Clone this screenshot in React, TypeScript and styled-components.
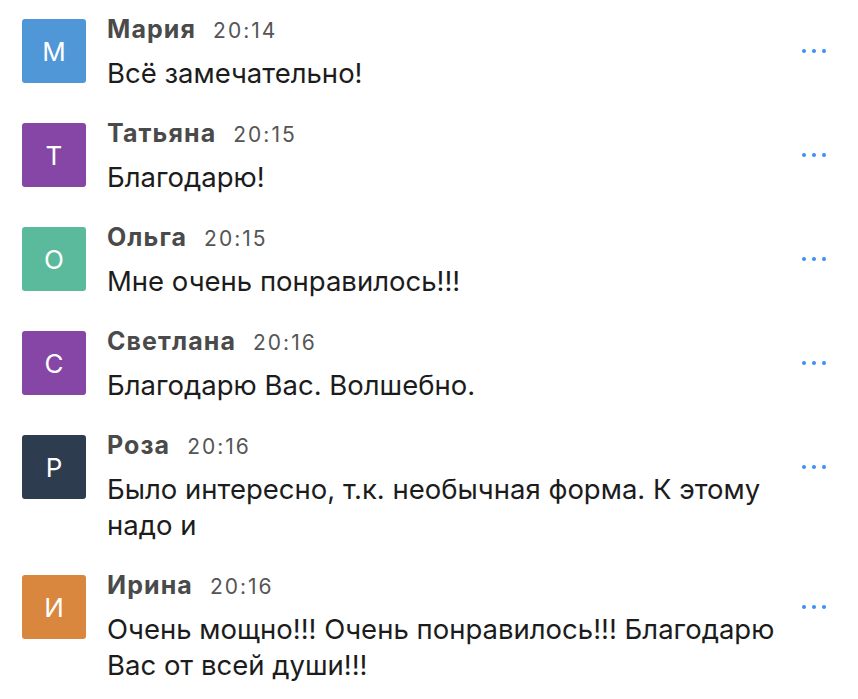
import React, {FC} from 'react';
import styled, {createGlobalStyle} from 'styled-components';

interface Message {
  name: string;
  time: string;
  text: string;
  color: string;
}

const messages: Message[] = [
  {name: 'Мария', time: '20:14', text: 'Всё замечательно!', color: '#5097d7'},
  {name: 'Татьяна', time: '20:15', text: 'Благодарю!', color: '#8646a6'},
  {name: 'Ольга', time: '20:15', text: 'Мне очень понравилось!!!', color: '#5bba9b'},
  {name: 'Светлана', time: '20:16', text: 'Благодарю Вас. Волшебно.', color: '#8646a6'},
  {name: 'Роза', time: '20:16', text: 'Было интересно, т.к. необычная форма. К этому надо и', color: '#2e3c4f'},
  {
    name: 'Ирина',
    time: '20:16',
    text: 'Очень мощно!!! Очень понравилось!!! Благодарю Вас от всей души!!!',
    color: '#d9863e',
  },
];

const App: FC = () => (
  <>
    <GlobalStyle />
    <List>
      {messages.map(({name, time, text, color}) => (
        <Row key={name}>
          <Avatar $color={color}>{name[0]}</Avatar>
          <Content>
            <Header>
              <Name>{name}</Name>
              <Time>{time}</Time>
            </Header>
            <Text>{text}</Text>
          </Content>
          <More aria-label="more">
            <Dot />
            <Dot />
            <Dot />
          </More>
        </Row>
      ))}
    </List>
  </>
);

const GlobalStyle = createGlobalStyle`
  body {
    margin: 0;
    background: #fff;
    font-family: Inter, "Liberation Sans", sans-serif;
  }
`;

const List = styled.div`
  display: flex;
  flex-direction: column;
  width: 858px;
`;

const Row = styled.div`
  display: flex;
  align-items: flex-start;
  padding: 14px 0 13px 22px;
`;

const Avatar = styled.div<{$color: string}>`
  flex: none;
  width: 64px;
  height: 64px;
  margin-top: 5px;
  border-radius: 3px;
  background: ${({$color}) => $color};
  color: #fff;
  font-size: 26px;
  display: flex;
  align-items: center;
  justify-content: center;
`;

const Content = styled.div`
  flex: 1;
  min-width: 0;
  margin-left: 21px;
  margin-right: 10px;
`;

const Header = styled.div`
  display: flex;
  align-items: baseline;
  gap: 17px;
  height: 30px;
  line-height: 30px;
`;

const Name = styled.span`
  font-size: 25px;
  font-weight: 700;
  letter-spacing: 1.1px;
  color: #4a4a4a;
`;

const Time = styled.span`
  font-size: 21px;
  letter-spacing: 2px;
  color: #555;
`;

const Text = styled.div`
  margin-top: 11px;
  font-size: 27.5px;
  line-height: 36px;
  color: #1c1c1c;
`;

const More = styled.div`
  flex: none;
  display: flex;
  gap: 6px;
  align-items: center;
  height: 64px;
  margin-top: 5px;
  padding-right: 32px;
`;

const Dot = styled.span`
  width: 4px;
  height: 4px;
  border-radius: 50%;
  background: #3d8ef5;
`;

export default App;
